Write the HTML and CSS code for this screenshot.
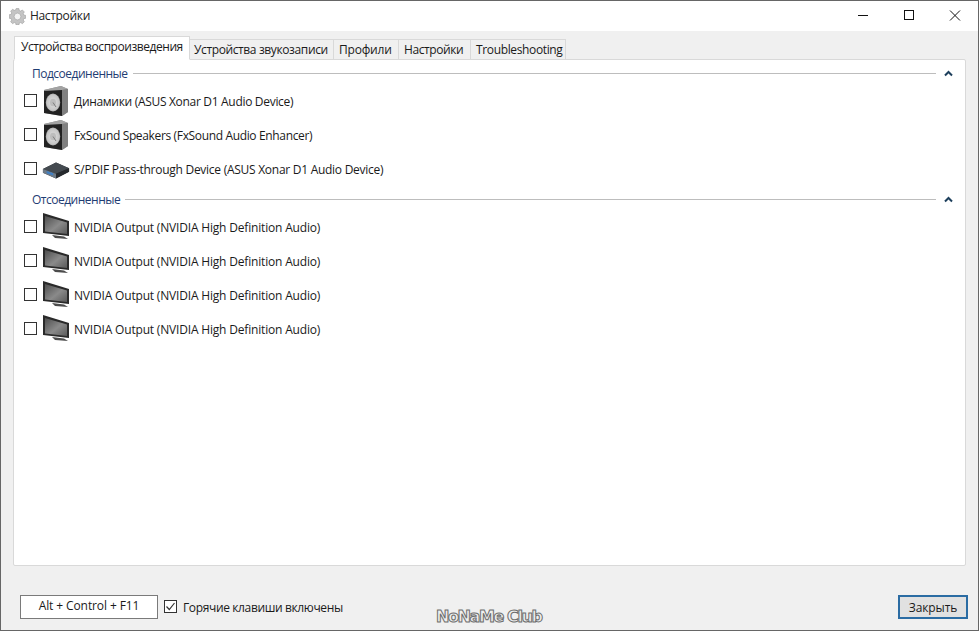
FILE: index.html
```html
<!DOCTYPE html>
<html lang="ru">
<head>
<meta charset="utf-8">
<title>Настройки</title>
<link rel="stylesheet" href="styles.css">
</head>
<body>
<svg class="defs" width="0" height="0" aria-hidden="true">
  <defs>
    <linearGradient id="screen" x1="0" y1="0" x2="1" y2="1">
      <stop offset="0" stop-color="#4e4e4e"/>
      <stop offset="0.55" stop-color="#8a8a8a"/>
      <stop offset="1" stop-color="#5a5a5a"/>
    </linearGradient>
    <radialGradient id="dial" cx="0.5" cy="0.5" r="0.6">
      <stop offset="0" stop-color="#e2e2e2"/>
      <stop offset="0.7" stop-color="#c6c6c6"/>
      <stop offset="1" stop-color="#808080"/>
    </radialGradient>
    <symbol id="speaker" viewBox="0 0 28 32">
      <path d="M2 5 L19 1 L26 4 L26 27 L20 31 L2 28 Z" fill="#8c8c8c"/>
      <path d="M2 5 L19 1 L26 4 L9 7 Z" fill="#a3a3a3"/>
      <path d="M2 6 L20 5 L20 31 L2 28 Z" fill="#222"/>
      <path d="M20 5 L26 4 L26 27 L20 31 Z" fill="#808080"/>
      <ellipse cx="11" cy="17.500" rx="7.200" ry="9" fill="url(#dial)"/>
      <ellipse cx="11" cy="17.500" rx="3" ry="3.800" fill="#bdbdbd"/>
      <path d="M11 17.500 L14 22" stroke="#7d7d7d" stroke-width="1"/>
    </symbol>
    <symbol id="device" viewBox="0 0 30 20">
      <path d="M1 9 L15 2 L29 8 L29 12 L15 19 L1 13 Z" fill="#2f3338"/>
      <path d="M1 9 L15 2 L29 8 L15 14 Z" fill="#444a50"/>
      <path d="M1 9 L15 14 L15 19 L1 13 Z" fill="#6e7a86"/>
      <path d="M15 14 L29 8 L29 12 L15 19 Z" fill="#26292d"/>
      <path d="M5 11 L12 13.500 L12 16 L5 13.500 Z" fill="#3f7fc4"/>
    </symbol>
    <symbol id="monitor" viewBox="0 0 28 28">
      <path d="M1 0 L27 8 L27 23 L1 20 Z" fill="#2a2a2a"/>
      <path d="M3 3 L25 9.500 L25 21 L3 18.500 Z" fill="url(#screen)"/>
      <path d="M10 22 L22 23.500 L26 26 L13 25 Z" fill="#4c4c4c"/>
    </symbol>
  </defs>
</svg>
<div class="window">
  <header class="titlebar">
    <svg class="app-icon" width="17" height="17" viewBox="0 0 17 17">
      <g fill="#c4c4c4" stroke="#9a9a9a" stroke-width="0.6">
        <path d="M7 0.500h3l.4 2.100 1.500.6 1.800-1.200 2.100 2.100-1.200 1.800.6 1.500 2.100.4v3l-2.100.4-.6 1.500 1.200 1.800-2.100 2.100-1.800-1.200-1.500.6-.4 2.100H7l-.4-2.100-1.500-.6-1.800 1.200-2.100-2.100 1.200-1.800-.6-1.500-2.100-.4V7l2.100-.4.6-1.500L1.200 3.300 3.300 1.200l1.800 1.200 1.500-.6z" transform="translate(.5 .1) scale(.94)"/>
        <circle cx="8.500" cy="8.500" r="3.400" fill="#f4f4f4"/>
      </g>
    </svg>
    <span class="title">Настройки</span>
    <div class="controls">
      <svg class="ctl" width="46" height="31" viewBox="0 0 46 31"><path d="M18 14.500h10" stroke="#111" fill="none"/></svg>
      <svg class="ctl" width="46" height="31" viewBox="0 0 46 31"><rect x="18.500" y="9.500" width="9" height="9" stroke="#111" fill="none"/></svg>
      <svg class="ctl" width="46" height="31" viewBox="0 0 46 31"><path d="M18 9.500l10 10M28 9.500l-10 10" stroke="#111" fill="none"/></svg>
    </div>
  </header>

  <main class="content">
    <nav class="tabs">
      <div class="tab active">Устройства воспроизведения</div>
      <div class="tab t2">Устройства звукозаписи</div>
      <div class="tab t3">Профили</div>
      <div class="tab t4">Настройки</div>
      <div class="tab t5">Troubleshooting</div>
    </nav>

    <section class="panel">
      <div class="group first">
        <span class="group-name">Подсоединенные</span>
        <span class="rule"></span>
        <svg class="chev" width="9" height="7" viewBox="0 0 9 7"><path d="M1 5.500 L4.500 2 L8 5.500" fill="none" stroke="#1d3f5c" stroke-width="2"/></svg>
      </div>
      <div class="row"><span class="check"></span><svg class="ico"><use href="#speaker"/></svg><span class="label">Динамики (ASUS Xonar D1 Audio Device)</span></div>
      <div class="row"><span class="check"></span><svg class="ico"><use href="#speaker"/></svg><span class="label fx">FxSound Speakers (FxSound Audio Enhancer)</span></div>
      <div class="row"><span class="check"></span><svg class="ico dev"><use href="#device"/></svg><span class="label sp">S/PDIF Pass-through Device (ASUS Xonar D1 Audio Device)</span></div>

      <div class="group">
        <span class="group-name">Отсоединенные</span>
        <span class="rule"></span>
        <svg class="chev" width="9" height="7" viewBox="0 0 9 7"><path d="M1 5.500 L4.500 2 L8 5.500" fill="none" stroke="#1d3f5c" stroke-width="2"/></svg>
      </div>
      <div class="row"><span class="check"></span><svg class="ico"><use href="#monitor"/></svg><span class="label nv">NVIDIA Output (NVIDIA High Definition Audio)</span></div>
      <div class="row"><span class="check"></span><svg class="ico"><use href="#monitor"/></svg><span class="label nv">NVIDIA Output (NVIDIA High Definition Audio)</span></div>
      <div class="row"><span class="check"></span><svg class="ico"><use href="#monitor"/></svg><span class="label nv">NVIDIA Output (NVIDIA High Definition Audio)</span></div>
      <div class="row"><span class="check"></span><svg class="ico"><use href="#monitor"/></svg><span class="label nv">NVIDIA Output (NVIDIA High Definition Audio)</span></div>
    </section>

    <footer class="footer">
      <div class="hotkey">Alt + Control + F11</div>
      <span class="check on">
        <svg width="11" height="11" viewBox="0 0 11 11"><path d="M1.500 5.500 L4.300 8.500 L9.500 2" fill="none" stroke="#333" stroke-width="1.200"/></svg>
      </span>
      <span class="hk-label">Горячие клавиши включены</span>
      <button class="close-btn">Закрыть</button>
    </footer>
  </main>
  <div class="watermark">NoNaMe Club</div>
</div>
</body>
</html>
```
FILE: styles.css
```css
* { box-sizing: border-box; }
html, body { margin: 0; padding: 0; }
body {
  width: 979px;
  height: 631px;
  overflow: hidden;
  font-family: "Open Sans", "Noto Sans", sans-serif;
  font-size: 12px;
  color: #1a1a1a;
  background: #f0f0f0;
}
.defs { position: absolute; }
.window {
  position: relative;
  width: 979px;
  height: 631px;
  display: flex;
  flex-direction: column;
  border: 1px solid #666;
  background: #f0f0f0;
}
.titlebar {
  height: 30px;
  flex: none;
  display: flex;
  align-items: center;
  background: #fff;
  padding-left: 8px;
}
.app-icon { flex: none; margin-right: 4px; }
.title { font-size: 12px; color: #222; letter-spacing: -0.33px; margin-top: -2px; }
.controls { margin-left: auto; display: flex; margin-right: 0; }
.ctl { display: block; }
.content {
  flex: 1;
  display: flex;
  flex-direction: column;
  padding: 5px 12px 0 12px;
  min-height: 0;
}
.tabs {
  display: flex;
  height: 24px;
  flex: none;
  align-items: flex-end;
  position: relative;
  z-index: 1;
  margin-bottom: -1px;
  padding-left: 1px;
}
.tab {
  height: 21px;
  line-height: 19px;
  padding: 0 5px;
  background: #f0f0f0;
  border: 1px solid #d9d9d9;
  border-left-width: 0;
  white-space: nowrap;
  letter-spacing: -0.2px;
}
.tab.active {
  height: 24px;
  line-height: 20px;
  background: #fff;
  border-left-width: 1px;
  border-bottom-color: #fff;
  padding: 0 6px;
  width: 176px;
  letter-spacing: -0.45px;
}
.tab.t2 { width: 144px; letter-spacing: -0.38px; padding-left: 4px; }
.tab.t3 { width: 65px; }
.tab.t4 { width: 72px; letter-spacing: -0.4px; }
.tab.t5 { width: 95px; letter-spacing: -0.36px; }
.panel {
  height: 507px;
  flex: none;
  background: #fff;
  border: 1px solid #d9d9d9;
  border-radius: 2px;
  padding: 0 0 0 10px;
}
.group {
  display: flex;
  align-items: center;
  height: 26px;
  padding-left: 8px;
  padding-right: 12px;
}
.group-name { color: #1f3d73; letter-spacing: -0.5px; white-space: nowrap; }
.rule { flex: 1; height: 1px; background: #bdbdbd; margin: 0 4px 0 5px; }
.chev { flex: none; margin-left: 4px; }
.row {
  height: 34px;
  display: flex;
  align-items: center;
}
.group + .row { margin-top: -2px; }
.row .check { margin-top: -2px; }
.check {
  flex: none;
  width: 13px;
  height: 13px;
  border: 1px solid #333;
  background: #fff;
  display: inline-flex;
  align-items: center;
  justify-content: center;
}
.ico { flex: none; width: 28px; height: 32px; margin-left: 5px; margin-right: 4px; }
.ico.dev { height: 20px; margin-top: 2px; }
.label { letter-spacing: -0.31px; white-space: nowrap; }
.label.fx { letter-spacing: -0.35px; }
.label.sp { letter-spacing: -0.27px; }
.label.nv { letter-spacing: -0.18px; }
.footer {
  flex: 1;
  display: flex;
  align-items: flex-start;
  padding: 29px 0 0 7px;
}
.hotkey {
  width: 138px;
  height: 24px;
  border: 1px solid #7a7a7a;
  background: #fff;
  text-align: center;
  line-height: 20px;
  letter-spacing: -0.1px;
}
.footer .check { margin: 5px 6px 0 6px; }
.hk-label { line-height: 25px; letter-spacing: -0.37px; }
.close-btn {
  margin-left: auto;
  margin-right: -2px;
  width: 70px;
  height: 24px;
  border: 2px solid #2b6ca3;
  background: #e1e1e1;
  font: inherit;
  letter-spacing: -0.1px;
  color: #1a1a1a;
  padding: 0;
  line-height: 17px;
}
.watermark {
  position: absolute;
  left: 435px;
  top: 606px;
  font-family: "DejaVu Sans", sans-serif;
  font-size: 16px;
  font-weight: 700;
  letter-spacing: -1.4px;
  color: #f0f0f0;
  -webkit-text-stroke: 1px #6e6e6e;
  line-height: 20px;
}
```
